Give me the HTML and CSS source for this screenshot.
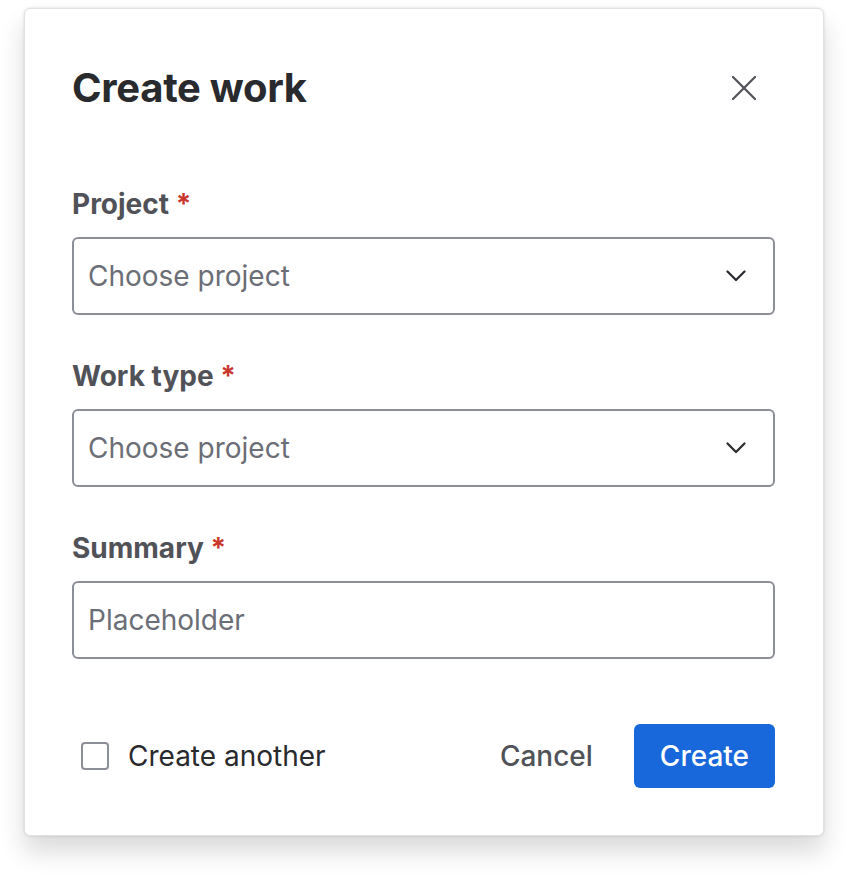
FILE: index.html
```html
<!DOCTYPE html>
<html lang="en">
<head>
<meta charset="utf-8">
<title>Create work</title>
<link rel="stylesheet" href="styles.css">
</head>
<body>
<div class="page">
<div class="dialog" role="dialog" aria-labelledby="dlg-title">
  <div class="header">
    <h1 class="title" id="dlg-title">Create work</h1>
    <button class="close" aria-label="Close">
      <svg width="24" height="24" viewBox="0 0 24 24" aria-hidden="true"><path d="M1 1 L23 23 M23 1 L1 23" fill="none" stroke="currentColor" stroke-width="2.2" stroke-linecap="round"/></svg>
    </button>
  </div>
  <div class="fields">
    <div class="field">
      <label class="label">Project <span class="req">*</span></label>
      <div class="input select">
        <span class="placeholder">Choose project</span>
        <svg class="chev" width="20" height="12" viewBox="0 0 20 12" aria-hidden="true"><path d="M1.5 1.5 L10 10 L18.5 1.5" fill="none" stroke="currentColor" stroke-width="2.2" stroke-linecap="round" stroke-linejoin="round"/></svg>
      </div>
    </div>
    <div class="field">
      <label class="label">Work type <span class="req">*</span></label>
      <div class="input select">
        <span class="placeholder">Choose project</span>
        <svg class="chev" width="20" height="12" viewBox="0 0 20 12" aria-hidden="true"><path d="M1.5 1.5 L10 10 L18.5 1.5" fill="none" stroke="currentColor" stroke-width="2.2" stroke-linecap="round" stroke-linejoin="round"/></svg>
      </div>
    </div>
    <div class="field">
      <label class="label">Summary <span class="req">*</span></label>
      <div class="input">
        <span class="placeholder">Placeholder</span>
      </div>
    </div>
  </div>
  <div class="footer">
    <label class="check">
      <span class="box"></span>
      <span class="check-text">Create another</span>
    </label>
    <div class="actions">
      <button class="btn subtle">Cancel</button>
      <button class="btn primary">Create</button>
    </div>
  </div>
</div>
</div>
</body>
</html>
```
FILE: styles.css
```css
* { box-sizing: border-box; }
html, body { margin: 0; padding: 0; background: #ffffff; }
body {
  font-family: Inter, "Noto Sans", "Liberation Sans", sans-serif;
  color: #292a2e;
}
.page {
  min-height: 876px;
  padding: 8px 0 0 24px;
}
.dialog {
  width: 800px;
  background: #ffffff;
  border: 1px solid #dfe1e5;
  border-radius: 6px;
  box-shadow: 0 16px 24px rgba(30, 31, 33, 0.16), 0 0 3px rgba(30, 31, 33, 0.14);
  padding: 55px 48px 47px 47px;
}
.header {
  display: flex;
  align-items: center;
  justify-content: space-between;
  height: 48px;
}
.title {
  margin: 0;
  font-size: 40px;
  line-height: 48px;
  font-weight: 700;
  color: #292a2e;
  letter-spacing: -0.3px;
}
.close {
  width: 48px;
  height: 48px;
  margin-right: 7px;
  border: 0;
  background: transparent;
  color: #505258;
  display: flex;
  align-items: center;
  justify-content: center;
  padding: 0;
}
.fields {
  margin-top: 76px;
  display: flex;
  flex-direction: column;
  gap: 45px;
}
.field {
  display: flex;
  flex-direction: column;
  gap: 17px;
}
.label {
  font-size: 28px;
  line-height: 32px;
  font-weight: 650;
  color: #505258;
}
.req { color: #c9372c; }
.input {
  height: 78px;
  border: 2px solid #8c8f97;
  border-radius: 6px;
  display: flex;
  align-items: center;
  justify-content: space-between;
  padding: 0 27px 0 14px;
}
.placeholder {
  font-size: 28px;
  line-height: 32px;
  color: #6b6e76;
}
.chev { color: #292a2e; }
.footer {
  margin-top: 65px;
  display: flex;
  align-items: center;
  justify-content: space-between;
  height: 64px;
}
.check {
  display: flex;
  align-items: center;
  gap: 19px;
  padding-left: 9px;
}
.box {
  width: 28px;
  height: 28px;
  border: 2px solid #8c8f97;
  border-radius: 4px;
}
.check-text {
  font-size: 28px;
  line-height: 32px;
  color: #292a2e;
}
.actions {
  display: flex;
  gap: 15px;
}
.btn {
  height: 64px;
  padding: 0 26px;
  border: 0;
  border-radius: 6px;
  font-family: inherit;
  font-size: 28px;
  font-weight: 500;
}
.subtle { background: transparent; color: #505258; }
.primary { background: #1868db; color: #ffffff; }
```
